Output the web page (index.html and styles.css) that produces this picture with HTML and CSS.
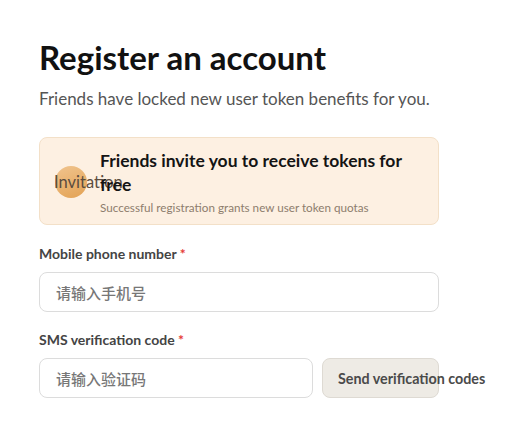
FILE: index.html
```html
<!DOCTYPE html>
<html lang="en">
<head>
<meta charset="utf-8">
<title>Register an account</title>
<link rel="stylesheet" href="styles.css">
</head>
<body>
<main class="page">
  <h1 class="title">Register an account</h1>
  <p class="subtitle">Friends have locked new user token benefits for you.</p>

  <section class="invite">
    <div class="avatar"><span class="avatar-text">Invitation</span></div>
    <div class="invite-body">
      <h2 class="invite-title">Friends invite you to receive tokens for free</h2>
      <p class="invite-note">Successful registration grants new user token quotas</p>
    </div>
  </section>

  <form class="form">
    <div class="field">
      <label class="label">Mobile phone number <span class="req">*</span></label>
      <input class="input" type="text" placeholder="请输入手机号">
    </div>
    <div class="field">
      <label class="label">SMS verification code <span class="req">*</span></label>
      <div class="row">
        <input class="input input-code" type="text" placeholder="请输入验证码">
        <button class="send" type="button">Send verification codes</button>
      </div>
    </div>
    <div class="field">
      <label class="label">Set login password <span class="req">*</span></label>
    </div>
  </form>
</main>
</body>
</html>
```

FILE: styles.css
```css
html, body {
  margin: 0;
  padding: 0;
  background: #ffffff;
}
body {
  font-family: "Lato", "Noto Sans CJK SC", sans-serif;
  color: #1a1a1a;
}
.page {
  width: 400px;
  padding: 35px 0 0 39px;
}
.title {
  margin: 0;
  font-size: 33px;
  line-height: 44px;
  font-weight: 700;
  color: #111111;
}
.subtitle {
  margin: 8px 0 0;
  font-size: 17px;
  line-height: 24px;
  color: #555555;
}
.invite {
  margin-top: 26px;
  display: flex;
  align-items: center;
  gap: 13px;
  padding: 11px 15px 9px;
  background: #fdf0e2;
  border: 1px solid #f3e0c8;
  border-radius: 8px;
}
.avatar {
  flex: none;
  width: 32px;
  height: 32px;
  border-radius: 50%;
  background: linear-gradient(160deg, #f0c48e, #e3a254);
  white-space: nowrap;
  display: flex;
  align-items: center;
}
.avatar-text {
  font-size: 16.5px;
  color: #5b4c3e;
  line-height: 1;
  margin-left: -1px;
}
.invite-body {
  flex: 1;
  min-width: 0;
}
.invite-title {
  margin: 0;
  font-size: 17.5px;
  line-height: 24px;
  font-weight: 700;
  color: #141414;
}
.invite-note {
  margin: 2px 0 0;
  font-size: 11.7px;
  line-height: 16px;
  color: #8d7d6d;
}
.form {
  margin-top: 20px;
}
.field {
  margin-bottom: 19px;
}
.label {
  display: block;
  font-size: 14px;
  line-height: 18px;
  font-weight: 700;
  color: #444444;
  margin-bottom: 9px;
}
.req {
  color: #e53935;
}
.input {
  box-sizing: border-box;
  width: 100%;
  height: 40px;
  padding: 0 16px;
  border: 1px solid #dcdcdc;
  border-radius: 8px;
  font-family: "Noto Sans CJK SC", sans-serif;
  font-size: 15px;
  font-weight: 500;
  background: #ffffff;
  outline: none;
}
.input::placeholder {
  color: #777777;
}
.row {
  display: flex;
  gap: 9px;
}
.input-code {
  flex: none;
  width: 274px;
}
.send {
  flex: none;
  box-sizing: border-box;
  width: 117px;
  height: 40px;
  padding: 0 15px;
  text-align: left;
  white-space: nowrap;
  overflow: visible;
  border: 1px solid #dedad3;
  border-radius: 8px;
  background: #eeebe5;
  font-family: "Lato", sans-serif;
  font-size: 14.3px;
  font-weight: 700;
  color: #4a4a4a;
}
```
